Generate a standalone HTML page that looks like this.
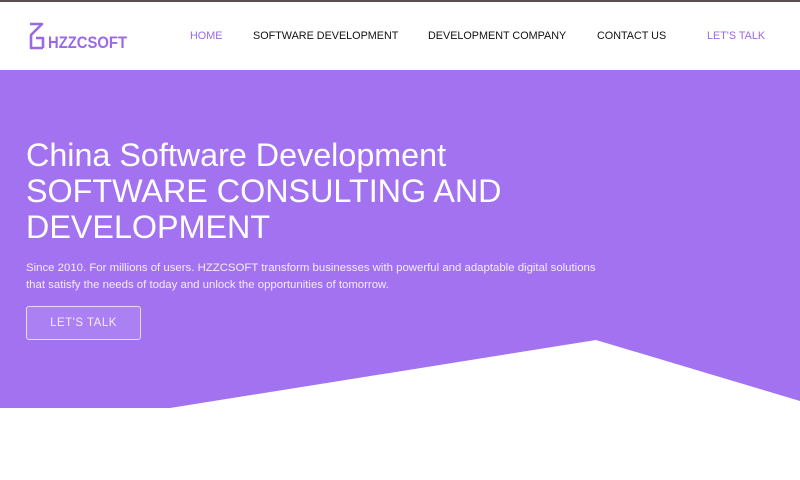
<!DOCTYPE html>
<html><head><meta charset="utf-8"><style>
*{margin:0;padding:0;box-sizing:border-box}
body{width:800px;height:480px;overflow:hidden;background:#fff;font-family:"Liberation Sans",sans-serif;position:relative}
.top{position:absolute;left:0;top:0;width:800px;height:2px;background:#5c4f4f}
.hdr{position:absolute;top:2px;left:0;width:800px;height:68px;background:#fff}
.logo{position:absolute;left:28px;top:20px}
.nav a{position:absolute;top:30px;font-size:10.8px;color:#111;text-decoration:none;white-space:nowrap}
.hero{position:absolute;top:70px;left:0;width:800px;height:338px;background:#a372f0}
h1{position:absolute;left:26px;top:137px;font-weight:normal;color:#fff;font-size:32.3px;line-height:36px}
p{position:absolute;left:26px;top:260px;color:#f3ecff;font-size:11.4px;line-height:17px;width:590px}
.btn{position:absolute;left:26px;top:306px;width:115px;height:34px;border:1.5px solid #e6dafc;border-radius:3px;color:#f3ecff;font-size:11.5px;letter-spacing:0.5px;text-align:center;line-height:33px;background:#ab80f2}
svg.cut{position:absolute;left:0;top:0}
</style></head><body>
<div class="hero"></div>
<svg class="cut" width="800" height="480"><polygon points="170,408 596,340 800,401 800,480 0,480 0,408" fill="#fff"/></svg>
<div class="top"></div>
<div class="hdr"></div>
<div class="logo"><svg width="102" height="32">
<path d="M2 4H14L3 15V28H15M8 18H15V28" fill="none" stroke="#9a68e8" stroke-width="2.6" stroke-linejoin="round"/>
<text x="20" y="28" font-family="Liberation Sans" font-size="16.5" font-weight="bold" fill="#9a68e8" textLength="79" lengthAdjust="spacingAndGlyphs">HZZCSOFT</text></svg></div>
<div class="nav">
<a style="left:190px;color:#9a68e8">HOME</a>
<a style="left:253px">SOFTWARE DEVELOPMENT</a>
<a style="left:428px">DEVELOPMENT COMPANY</a>
<a style="left:597px">CONTACT US</a>
<a style="left:707px;color:#9a68e8">LET'S TALK</a>
</div>
<h1>China Software Development<br>SOFTWARE CONSULTING AND<br>DEVELOPMENT</h1>
<p>Since 2010. For millions of users. HZZCSOFT transform businesses with powerful and adaptable digital solutions that satisfy the needs of today and unlock the opportunities of tomorrow.</p>
<div class="btn">LET'S TALK</div>
</body></html>
